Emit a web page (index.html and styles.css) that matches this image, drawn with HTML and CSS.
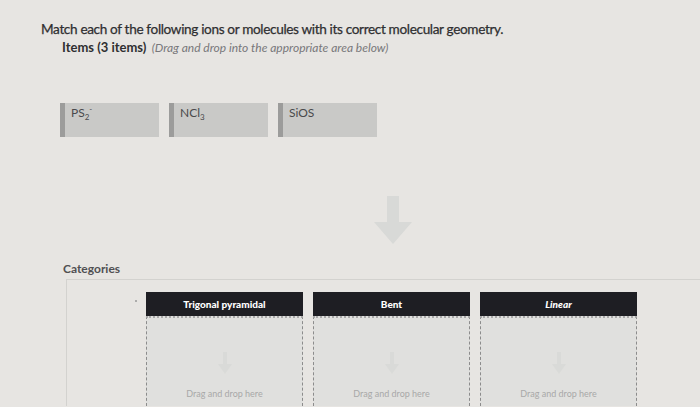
FILE: index.html
```html
<!DOCTYPE html>
<html>
    <head>
        <meta charset="utf-8">
        <link rel="stylesheet" href="styles.css">
    </head>
    <body>
        <div class="page">
            <div class="question">Match each of the following ions or molecules with its correct molecular geometry.</div>
            <div class="itemsHead">
                <b>Items (3 items)</b> <i>(Drag and drop into the appropriate area below)</i>
            </div>
            <div class="items">
                <div class="item">PS<sub>2</sub><sup>-</sup></div>
                <div class="item">NCl<sub>3</sub></div>
                <div class="item">SiOS</div>
            </div>
            <div class="bigArrow">
                <svg width="38" height="48" viewBox="0 0 38 48"><path d="M13 0h12v26h13L19 48 0 26h13z" fill="#d8d9d7"/></svg>
            </div>
            <div class="catLabel">Categories</div>
            <div class="catBox">
                <div class="dot"></div>
                <div class="cols">
                    <div class="col">
                        <div class="colHead">Trigonal pyramidal</div>
                        <div class="drop">
                            <svg width="14" height="22" viewBox="0 0 14 22"><path d="M5 0h4v12h5l-7 10-7-10h5z" fill="#d9dad8"/></svg>
                            <span>Drag and drop here</span>
                        </div>
                    </div>
                    <div class="col">
                        <div class="colHead">Bent</div>
                        <div class="drop">
                            <svg width="14" height="22" viewBox="0 0 14 22"><path d="M5 0h4v12h5l-7 10-7-10h5z" fill="#d9dad8"/></svg>
                            <span>Drag and drop here</span>
                        </div>
                    </div>
                    <div class="col">
                        <div class="colHead italic">Linear</div>
                        <div class="drop">
                            <svg width="14" height="22" viewBox="0 0 14 22"><path d="M5 0h4v12h5l-7 10-7-10h5z" fill="#d9dad8"/></svg>
                            <span>Drag and drop here</span>
                        </div>
                    </div>
                </div>
            </div>
        </div>
    </body>
</html>
```

FILE: styles.css
```css
body {
    margin: 0;
    background: #e7e5e2;
    font-family: Lato, "Open Sans", sans-serif;
    color: #2f2f31;
    height: 407px;
    overflow: hidden;
}
.page {
    padding: 21px 0 0 41px;
}
.question {
    font-size: 13.6px;
    letter-spacing: -0.35px;
    -webkit-text-stroke: 0.25px #2f2f31;
}
.itemsHead {
    margin: 2px 0 0 21px;
    font-size: 13px;
}
.itemsHead i {
    font-size: 12px;
    color: #77777a;
    margin-left: 2px;
}
.items {
    display: flex;
    gap: 10px;
    margin: 48px 0 0 19px;
}
.item {
    width: 88px;
    height: 34px;
    background: #c9c9c7;
    border-left: 5px solid #9c9c9b;
    padding-left: 6px;
    font-size: 12px;
    color: #4a4a4c;
    line-height: 20px;
}
.item sub, .item sup {
    font-size: 8px;
    line-height: 0;
}
.bigArrow {
    margin: 59px 0 0 333px;
    height: 48px;
}
.catLabel {
    margin: 17px 0 0 22px;
    font-size: 12px;
    font-weight: bold;
    color: #505052;
}
.catBox {
    margin: 3px 0 0 25px;
    border-top: 1px solid #d3d2cf;
    border-left: 1px solid #d3d2cf;
    display: flex;
    padding: 12px 0 0 79px;
    position: relative;
}
.dot {
    position: absolute;
    left: 68px;
    top: 20px;
    width: 2px;
    height: 2px;
    background: #999;
    border-radius: 50%;
}
.cols {
    display: flex;
    gap: 10px;
}
.col {
    width: 157px;
    display: flex;
    flex-direction: column;
}
.colHead {
    background: #1e1e23;
    color: #fff;
    font-size: 10px;
    font-weight: 900;
    height: 24px;
    line-height: 24px;
    text-align: center;
}
.colHead.italic {
    font-style: italic;
}
.drop {
    height: 90px;
    background: #e0e0de;
    border: 1px dashed #8c8c8c;
    border-top: 2px dotted #a9a9a9;
    border-bottom: none;
    display: flex;
    flex-direction: column;
    align-items: center;
    padding-top: 34px;
    box-sizing: border-box;
}
.drop span {
    margin-top: 14px;
    font-size: 9px;
    color: #a8a8a8;
}
```
